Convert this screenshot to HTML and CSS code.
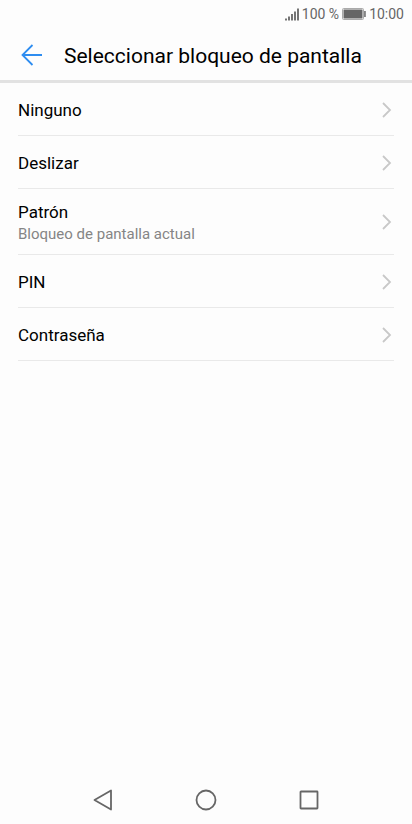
FILE: index.html
```html
<!DOCTYPE html>
<html lang="es">
  <head>
    <meta charset="UTF-8" />
    <meta name="viewport" content="width=device-width, initial-scale=1.0" />
    <title>Seleccionar bloqueo de pantalla</title>
    <link rel="stylesheet" href="styles.css">
  </head>
  <body>
    <div class="status-bar">
      <svg class="signal" width="14" height="13" viewBox="0 0 14 13" aria-hidden="true">
        <path d="M1 10.500V12.500M4 8.500V12.500M7 6V12.500M10 3.500V12.500M13 .5V12.500" />
      </svg>
      <span>100 %</span>
      <svg class="battery" width="24" height="12" viewBox="0 0 24 12" aria-hidden="true">
        <rect class="battery-case" x=".5" y=".5" width="21" height="11" rx="1" />
        <rect class="battery-level" x="1.500" y="1.500" width="19" height="9" />
        <rect class="battery-level" x="22.200" y="3" width="1.500" height="6" />
      </svg>
      <span>10:00</span>
    </div>

    <header class="header">
      <a class="back" href="#" aria-label="Atrás">
        <svg width="22" height="22" viewBox="0 0 22 22" aria-hidden="true">
          <path d="M11.500 1L1.500 11L11.500 21M1.500 11H21" />
        </svg>
      </a>
      <h1>Seleccionar bloqueo de pantalla</h1>
    </header>

    <main>
      <ul class="lock-list">
        <li>
          <a class="lock-item" href="#">
            <span class="name">Ninguno</span>
            <svg class="chevron" width="10" height="16" viewBox="0 0 10 16" aria-hidden="true"><path d="M1 1L8 8L1 15" /></svg>
          </a>
        </li>
        <li>
          <a class="lock-item" href="#">
            <span class="name">Deslizar</span>
            <svg class="chevron" width="10" height="16" viewBox="0 0 10 16" aria-hidden="true"><path d="M1 1L8 8L1 15" /></svg>
          </a>
        </li>
        <li>
          <a class="lock-item" href="#">
            <span class="text">
              <span class="name">Patrón</span>
              <span class="detail">Bloqueo de pantalla actual</span>
            </span>
            <svg class="chevron" width="10" height="16" viewBox="0 0 10 16" aria-hidden="true"><path d="M1 1L8 8L1 15" /></svg>
          </a>
        </li>
        <li>
          <a class="lock-item" href="#">
            <span class="name">PIN</span>
            <svg class="chevron" width="10" height="16" viewBox="0 0 10 16" aria-hidden="true"><path d="M1 1L8 8L1 15" /></svg>
          </a>
        </li>
        <li>
          <a class="lock-item" href="#">
            <span class="name">Contraseña</span>
            <svg class="chevron" width="10" height="16" viewBox="0 0 10 16" aria-hidden="true"><path d="M1 1L8 8L1 15" /></svg>
          </a>
        </li>
      </ul>
    </main>

    <nav class="nav-bar">
      <button type="button" aria-label="Volver">
        <svg width="22" height="22" viewBox="0 0 22 22" aria-hidden="true">
          <path d="M19 1.500V20.500L2.500 11Z" />
        </svg>
      </button>
      <button type="button" aria-label="Inicio">
        <svg width="22" height="22" viewBox="0 0 22 22" aria-hidden="true">
          <circle cx="11" cy="11" r="9.500" />
        </svg>
      </button>
      <button type="button" aria-label="Recientes">
        <svg width="22" height="22" viewBox="0 0 22 22" aria-hidden="true">
          <rect x="2.500" y="2.500" width="17" height="17" rx=".5" />
        </svg>
      </button>
    </nav>
  </body>
</html>
```
FILE: styles.css
```css
* {
  box-sizing: border-box;
}
body {
  display: flex;
  flex-direction: column;
  min-height: 100vh;
  margin: 0;
  background-color: #fdfdfd;
  color: #000;
  font-family: Roboto, "Liberation Sans", sans-serif;
}
a {
  color: inherit;
  text-decoration: none;
}
svg {
  display: block;
  flex: none;
  fill: none;
}
.status-bar {
  display: flex;
  align-items: center;
  justify-content: flex-end;
  gap: 3px;
  height: 28px;
  padding: 0 8px;
  color: #666;
  font-size: 14px;
}
.signal {
  stroke: #666;
  stroke-width: 1.8;
}
.battery-case {
  stroke: #aaa;
}
.battery-level {
  fill: #666;
}
.header {
  display: flex;
  align-items: center;
  gap: 21px;
  height: 55px;
  padding: 2px 21px 0;
  border-bottom: 3px solid #e2e2e2;
}
.back svg {
  stroke: #2e8df0;
  stroke-width: 1.8;
}
h1 {
  margin: 0;
  padding-top: 2px;
  font-size: 21px;
  font-weight: 400;
  line-height: 28px;
}
main {
  flex: 1;
}
.lock-list {
  margin: 0;
  padding: 0 18px;
  list-style: none;
}
.lock-item {
  display: flex;
  align-items: center;
  justify-content: space-between;
  min-height: 53px;
  padding: 11px 2px 10px 0;
  border-bottom: 1px solid #e9e9e9;
}
.name {
  display: block;
  font-size: 17px;
  line-height: 24px;
}
.detail {
  display: block;
  color: #858585;
  font-size: 15px;
  line-height: 20px;
}
.chevron {
  stroke: #c8c8c8;
  stroke-width: 1.8;
}
.nav-bar {
  display: grid;
  grid-template-columns: repeat(3, 25%);
  justify-content: center;
  height: 48px;
}
.nav-bar button {
  display: flex;
  align-items: center;
  justify-content: center;
  padding: 0;
  border: 0;
  background: none;
  cursor: pointer;
}
.nav-bar svg {
  stroke: #666;
  stroke-width: 1.8;
  stroke-linejoin: round;
}
```
